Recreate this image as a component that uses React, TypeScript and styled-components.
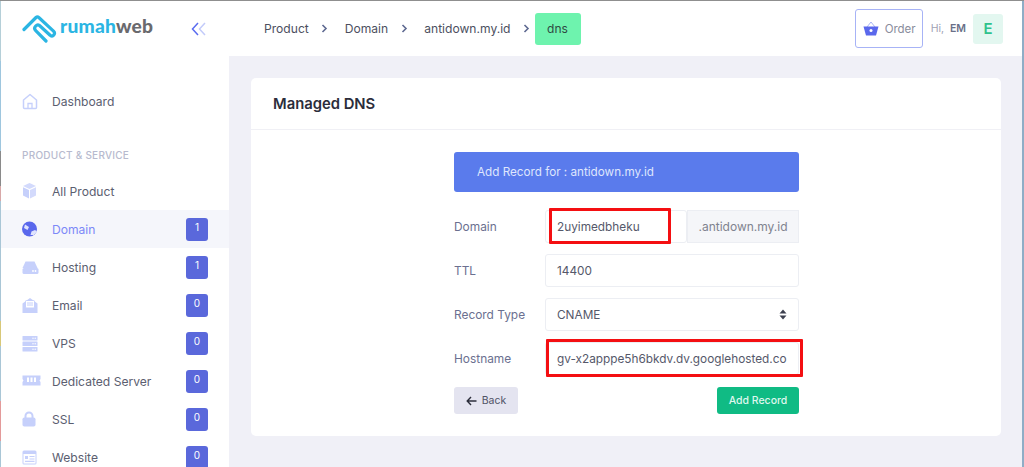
import type { ReactNode } from 'react';
import styled, { createGlobalStyle } from 'styled-components';

const GlobalStyle = createGlobalStyle`
  html, body {
    margin: 0;
    padding: 0;
    height: 467px;
    overflow: hidden;
    background: #fff;
    font-family: Inter, "Open Sans", sans-serif;
  }
  * { box-sizing: border-box; }
`;

const Screen = styled.div`
  width: 1024px;
  height: 467px;
  display: flex;
  flex-direction: column;
  overflow: hidden;
`;

const WindowTop = styled.div`
  height: 1px;
  flex: none;
  background: #8f8f8f;
`;

const WindowBody = styled.div`
  flex: 1;
  min-height: 0;
  display: flex;
`;

const LeftEdge = styled.div`
  width: 1px;
  flex: none;
  background: linear-gradient(
    180deg,
    #b5cfd8 0 60px,
    #9ec6de 60px 150px,
    #8a8a8a 150px 185px,
    #d8a8a8 185px 200px,
    #a9c6d6 200px 320px,
    #d8c878 320px 345px,
    #a9c6d6 345px 400px,
    #e39a9a 400px 440px,
    #a9c6d6 440px
  );
`;

const RightEdge = styled.div`
  width: 2px;
  flex: none;
  background: #8fadc6;
`;

const Sidebar = styled.aside`
  width: 228px;
  flex: none;
  background: #fff;
  display: flex;
  flex-direction: column;
`;

const LogoRow = styled.div`
  height: 55px;
  flex: none;
  display: flex;
  align-items: center;
  padding: 0 0 0 21px;
  gap: 2px;
  margin-bottom: 26px;
`;

const LogoText = styled.span`
  font-family: Lato, sans-serif;
  font-size: 19.2px;
  font-weight: 900;
  letter-spacing: 0.2px;
  color: #2bb5e3;
  line-height: 1;
  margin-top: -5px;
  b {
    font-weight: 900;
    color: #6a6a6e;
  }
`;

const Collapse = styled.span`
  display: flex;
  margin-left: auto;
  margin-right: 22px;
`;

const NavRow = styled.div<{ $active?: boolean }>`
  height: 38px;
  flex: none;
  display: flex;
  align-items: center;
  padding: 0 21px;
  background: ${(p) => (p.$active ? '#f5f6fb' : 'transparent')};
  color: ${(p) => (p.$active ? '#7c88f8' : '#5b5e70')};
  font-size: 12.1px;
  font-weight: 400;
`;

const NavIcon = styled.span`
  width: 30px;
  flex: none;
  display: flex;
  align-items: center;
`;

const NavLabel = styled.span`
  flex: 1;
`;

const Badge = styled.span`
  width: 22px;
  height: 23px;
  border-radius: 3px;
  background: #5a68db;
  color: #fff;
  font-size: 10px;
  display: flex;
  justify-content: center;
  padding-top: 3px;
  margin-top: 1px;
`;

const SectionLabel = styled.div`
  flex: none;
  padding: 0 21px;
  margin-top: 27px;
  height: 16px;
  line-height: 16px;
  font-size: 10px;
  font-weight: 500;
  letter-spacing: 0.25px;
  color: #b7bace;
  margin-bottom: 9px;
`;

const Content = styled.div`
  flex: 1;
  min-width: 0;
  display: flex;
  flex-direction: column;
  background: #f0f0f7;
`;

const Topbar = styled.header`
  height: 55px;
  flex: none;
  background: #fff;
  display: flex;
  align-items: center;
  padding: 0 19px 0 35px;
`;

const Crumb = styled.span`
  font-size: 12.1px;
  color: #4c4f60;
`;

const CrumbArrow = styled.span`
  display: flex;
  width: 36px;
  justify-content: center;
  padding-right: 4px;
`;

const CrumbCurrent = styled.span`
  width: 46px;
  height: 32px;
  border-radius: 3px;
  background: #6ef3ae;
  color: #2f4a44;
  font-size: 12px;
  display: flex;
  align-items: center;
  justify-content: center;
  margin-left: -12px;
`;

const OrderButton = styled.button`
  margin-left: auto;
  width: 68px;
  height: 39px;
  border: 1px solid #a7b3f6;
  border-radius: 3px;
  background: #fff;
  color: #8a8d9c;
  font-family: inherit;
  font-size: 11.5px;
  display: flex;
  align-items: center;
  gap: 6px;
  padding: 0 0 0 7px;
`;

const Greeting = styled.span`
  margin-left: 8px;
  font-size: 10.5px;
  color: #a0a2b5;
  white-space: nowrap;
  b {
    margin-left: 3px;
    font-weight: 600;
    color: #6a6f88;
  }
`;

const Avatar = styled.span`
  width: 30px;
  height: 30px;
  margin-left: 7px;
  border-radius: 3px;
  background: #e3f7f0;
  color: #2fc28c;
  font-size: 15px;
  font-weight: 600;
  display: flex;
  align-items: center;
  justify-content: center;
`;

const Main = styled.main`
  flex: 1;
  min-height: 0;
  padding: 22px 21px 0 22px;
`;

const Card = styled.section`
  height: 358px;
  background: #fff;
  border-radius: 5px;
`;

const CardHeader = styled.div`
  height: 52px;
  border-bottom: 1px solid #f0f0f5;
  padding: 0 22px;
  display: flex;
  align-items: center;
  font-size: 14.8px;
  font-weight: 600;
  color: #2b2d3b;
`;

const Form = styled.form`
  width: 345px;
  margin: 22px 0 0 203px;
  display: flex;
  flex-direction: column;
`;

const Banner = styled.div`
  height: 40px;
  border-radius: 3px;
  background: #5a7bec;
  color: #dfe6fd;
  font-size: 11.7px;
  padding-left: 23px;
  display: flex;
  align-items: center;
  margin-bottom: 18px;
`;

const Field = styled.div`
  height: 33px;
  display: grid;
  grid-template-columns: 91px 1fr;
  align-items: center;
  margin-bottom: 11px;
`;

const FieldLabel = styled.label`
  font-size: 11.9px;
  color: #6b7090;
`;

const InputGroup = styled.div`
  position: relative;
  display: flex;
  height: 33px;
`;

const Input = styled.div`
  flex: 1;
  min-width: 0;
  height: 33px;
  border: 1px solid #eceef3;
  border-radius: 3px;
  background: #fff;
  color: #55586a;
  font-size: 11.8px;
  padding: 0 11px;
  display: flex;
  align-items: center;
  white-space: nowrap;
  overflow: hidden;
`;

const Addon = styled.div`
  width: 112px;
  flex: none;
  height: 33px;
  border: 1px solid #eceef3;
  background: #f5f6f9;
  color: #80838f;
  font-size: 12px;
  display: flex;
  align-items: center;
  justify-content: center;
`;

const SelectArrows = styled.span`
  margin-left: auto;
  display: flex;
`;

// the red boxes drawn over the screenshot
const DomainMark = styled.span`
  position: absolute;
  top: -2px;
  bottom: -1px;
  left: 4px;
  width: 122px;
  border: 3px solid #f40f12;
  border-radius: 1px;
  pointer-events: none;
`;

const HostnameMark = styled(DomainMark)`
  top: -3px;
  bottom: -2px;
  left: 1px;
  right: -4px;
  width: auto;
`;

const Actions = styled.div`
  display: flex;
  justify-content: space-between;
  margin-top: 1px;
`;

const BackButton = styled.button`
  width: 64px;
  height: 27px;
  border: none;
  border-radius: 3px;
  background: #e4e4f0;
  color: #4f5266;
  font-family: inherit;
  font-size: 10.5px;
  display: flex;
  align-items: center;
  justify-content: center;
  gap: 5px;
`;

const SubmitButton = styled.button`
  width: 82px;
  height: 27px;
  border: none;
  border-radius: 3px;
  background: #10bb84;
  color: #dff7ee;
  font-family: inherit;
  font-size: 10.5px;
  font-weight: 500;
`;

const iconFill = '#c6d0fb';

const Svg = ({ children, w = 17, h = 17 }: { children: ReactNode; w?: number; h?: number }) => (
  <svg width={w} height={h} viewBox={`0 0 ${w} ${h}`}>
    {children}
  </svg>
);

const HomeIcon = () => (
  <Svg>
    <path d="M1.500 7 8 1.500 14.500 7v7.500a1 1 0 0 1-1 1h-11a1 1 0 0 1-1-1z" fill="none" stroke={iconFill} strokeWidth="1.500" strokeLinejoin="round" />
    <path d="M6 15v-4.500h4V15" fill="none" stroke={iconFill} strokeWidth="1.300" />
  </Svg>
);

const BoxIcon = () => (
  <Svg h={16}>
    <path d="M7.500 0 14 3l-6.500 3L1 3z" fill="#d3dafc" />
    <path d="M1 4.200 7 7v8.500l-6-3z" fill={iconFill} />
    <path d="M14 4.200 8 7v8.500l6-3z" fill="#d3dafc" />
  </Svg>
);

const GlobeIcon = () => (
  <Svg>
    <circle cx="7.500" cy="8" r="7.500" fill="#5a68ec" />
    <path d="M3 3.500 7 6 5.500 9 2 7zM8.500 14l1-3.500 3.500-1.500 2 1.500-3 3.500z" fill="#dfe3fd" />
  </Svg>
);

const HostingIcon = () => (
  <Svg>
    <path d="M3.500 2.500h9l3 6.500h-15z" fill={iconFill} />
    <rect x="0.500" y="9" width="16" height="6" rx="1.500" fill={iconFill} />
    <circle cx="11" cy="12" r="0.900" fill="#fff" />
    <circle cx="13.500" cy="12" r="0.900" fill="#fff" />
  </Svg>
);

const EmailIcon = () => (
  <Svg h={17} w={16}>
    <path d="M0.500 6.500 8 1l7.500 5.500V16h-15z" fill={iconFill} />
    <rect x="3.500" y="3.500" width="9" height="7.500" rx="1" fill="#fff" stroke={iconFill} />
    <path d="M5 6h6M5 8h6" stroke={iconFill} strokeWidth="1" />
  </Svg>
);

const VpsIcon = () => (
  <Svg w={16}>
    {[1, 6.500, 12].map((y) => (
      <g key={y}>
        <rect x="0.500" y={y} width="15" height="4.400" rx="0.500" fill={iconFill} />
        <circle cx="11" cy={y + 2.200} r="0.700" fill="#fff" />
        <circle cx="13.200" cy={y + 2.200} r="0.700" fill="#fff" />
      </g>
    ))}
  </Svg>
);

const ServerIcon = () => (
  <Svg w={19} h={12}>
    <path d="M0.500 0.500h18v3.500l-1 1.500 1 1.500v3.500h-18v-3.500l1-1.500-1-1.500z" fill={iconFill} />
    <rect x="5" y="2.500" width="2" height="4.500" fill="#fff" />
    <rect x="8.500" y="2.500" width="2" height="4.500" fill="#fff" />
    <rect x="12" y="2.500" width="2" height="4.500" fill="#fff" />
  </Svg>
);

const LockIcon = () => (
  <Svg w={14} h={16}>
    <path d="M3.500 7V5a3.500 3.500 0 0 1 7 0v2" fill="none" stroke={iconFill} strokeWidth="2" />
    <rect x="0.500" y="6.500" width="13" height="9" rx="1.800" fill={iconFill} />
  </Svg>
);

const WebsiteIcon = () => (
  <Svg w={15} h={15}>
    <rect x="0.500" y="0.500" width="14" height="14" rx="1.500" fill={iconFill} />
    <rect x="1.500" y="4" width="12" height="9.500" fill="#fff" />
    <rect x="3" y="6" width="3" height="3" fill={iconFill} />
    <path d="M7.500 6.500h5M7.500 9h5M3 11.300h9.500" stroke={iconFill} strokeWidth="1.200" />
  </Svg>
);

const Chevron = () => (
  <svg width="7" height="9" viewBox="0 0 7 9">
    <path d="M1.500 1 5 4.500 1.500 8" fill="none" stroke="#5e6991" strokeWidth="1.600" />
  </svg>
);

const RumahwebMark = () => (
  <svg width="36" height="30" viewBox="0 0 36 30">
    <path
      d="M2 15.500 14 3.500a2 2 0 0 1 2.800 0L31.500 17.200c2.500 2.600-.5 6.200-3.400 4L17.500 11.500c-1.300-1-2.800-.6-3.800.5-1.500 1.600-1.300 3.300 0 4.600L24 27"
      fill="none"
      stroke="#2bb5e3"
      strokeWidth="3.200"
      strokeLinecap="round"
      strokeLinejoin="round"
    />
  </svg>
);

const navItems: { label: string; icon: ReactNode; count: number; active?: boolean }[] = [
  { label: 'Domain', icon: <GlobeIcon />, count: 1, active: true },
  { label: 'Hosting', icon: <HostingIcon />, count: 1 },
  { label: 'Email', icon: <EmailIcon />, count: 0 },
  { label: 'VPS', icon: <VpsIcon />, count: 0 },
  { label: 'Dedicated Server', icon: <ServerIcon />, count: 0 },
  { label: 'SSL', icon: <LockIcon />, count: 0 },
  { label: 'Website', icon: <WebsiteIcon />, count: 0 },
];

export default function App() {
  return (
    <Screen>
      <GlobalStyle />
      <WindowTop />
      <WindowBody>
        <LeftEdge />
        <Sidebar>
          <LogoRow>
            <RumahwebMark />
            <LogoText>
              rumah<b>web</b>
            </LogoText>
            <Collapse>
              <svg width="16" height="14" viewBox="0 0 16 14">
                <path d="M7 1 1.500 7 7 13" fill="none" stroke="#5a6cf0" strokeWidth="1.500" />
                <path d="M14 1 8.500 7 14 13" fill="none" stroke="#c3cbfa" strokeWidth="1.500" />
              </svg>
            </Collapse>
          </LogoRow>
          <NavRow>
            <NavIcon>
              <HomeIcon />
            </NavIcon>
            <NavLabel>Dashboard</NavLabel>
          </NavRow>
          <SectionLabel>PRODUCT &amp; SERVICE</SectionLabel>
          <NavRow>
            <NavIcon>
              <BoxIcon />
            </NavIcon>
            <NavLabel>All Product</NavLabel>
          </NavRow>
          {navItems.map((item) => (
            <NavRow key={item.label} $active={item.active}>
              <NavIcon>{item.icon}</NavIcon>
              <NavLabel>{item.label}</NavLabel>
              <Badge>{item.count}</Badge>
            </NavRow>
          ))}
        </Sidebar>
        <Content>
          <Topbar>
            <Crumb>Product</Crumb>
            <CrumbArrow>
              <Chevron />
            </CrumbArrow>
            <Crumb>Domain</Crumb>
            <CrumbArrow>
              <Chevron />
            </CrumbArrow>
            <Crumb>antidown.my.id</Crumb>
            <CrumbArrow>
              <Chevron />
            </CrumbArrow>
            <CrumbCurrent>dns</CrumbCurrent>
            <OrderButton type="button">
              <svg width="16" height="15" viewBox="0 0 16 15">
                <path d="M4 6 8 1l4 5" fill="none" stroke="#a7b3f6" strokeWidth="1" />
                <path d="M0.500 5.500h15L13 14.500H3z" fill="#5a68ec" />
                <circle cx="8" cy="9.500" r="1.500" fill="#fff" />
              </svg>
              Order
            </OrderButton>
            <Greeting>
              Hi, <b>EM</b>
            </Greeting>
            <Avatar>E</Avatar>
          </Topbar>
          <Main>
            <Card>
              <CardHeader>Managed DNS</CardHeader>
              <Form>
                <Banner>Add Record for : antidown.my.id</Banner>
                <Field>
                  <FieldLabel>Domain</FieldLabel>
                  <InputGroup>
                    <Input>2uyimedbheku</Input>
                    <Addon>.antidown.my.id</Addon>
                    <DomainMark />
                  </InputGroup>
                </Field>
                <Field>
                  <FieldLabel>TTL</FieldLabel>
                  <InputGroup>
                    <Input>14400</Input>
                  </InputGroup>
                </Field>
                <Field>
                  <FieldLabel>Record Type</FieldLabel>
                  <InputGroup>
                    <Input>
                      CNAME
                      <SelectArrows>
                        <svg width="8" height="11" viewBox="0 0 8 11">
                          <path d="M4 0.500 7.500 4.500h-7zM4 10.500 0.500 6.500h7z" fill="#3c3f4e" />
                        </svg>
                      </SelectArrows>
                    </Input>
                  </InputGroup>
                </Field>
                <Field>
                  <FieldLabel>Hostname</FieldLabel>
                  <InputGroup>
                    <Input>gv-x2apppe5h6bkdv.dv.googlehosted.co</Input>
                    <HostnameMark />
                  </InputGroup>
                </Field>
                <Actions>
                  <BackButton type="button">
                    <svg width="11" height="10" viewBox="0 0 11 10">
                      <path d="M10.500 5H1.500M5 1 1.200 5 5 9" fill="none" stroke="#2d2f3c" strokeWidth="1.400" />
                    </svg>
                    Back
                  </BackButton>
                  <SubmitButton type="button">Add Record</SubmitButton>
                </Actions>
              </Form>
            </Card>
          </Main>
        </Content>
        <RightEdge />
      </WindowBody>
    </Screen>
  );
}
